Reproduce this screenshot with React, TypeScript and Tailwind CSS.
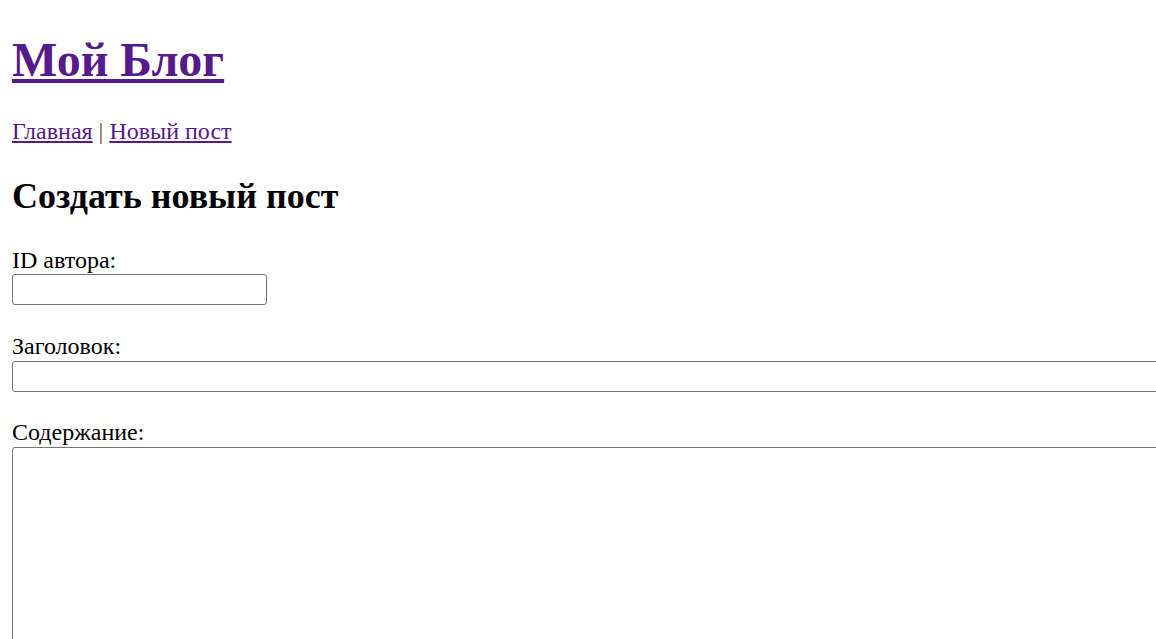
export default function App() {
  return (
    <div className="h-[639px] w-[1156px] overflow-hidden bg-white px-3 font-['Liberation_Serif',serif] text-black">
      <h1 className="mt-[32px] text-[48px] font-bold leading-[56px]">
        <a href="#" className="text-[#551a8b] underline">
          Мой Блог
        </a>
      </h1>
      <nav className="mt-[29px] text-[24px] leading-[28px]">
        <a href="#" className="text-[#551a8b] underline">
          Главная
        </a>
        <span className="text-[#6b4a2a]"> | </span>
        <a href="#" className="text-[#551a8b] underline">
          Новый пост
        </a>
      </nav>
      <h2 className="mt-[31px] text-[36px] font-bold leading-[41px]">Создать новый пост</h2>
      <form className="text-[24px] leading-[28px]">
        <label className="mt-[29px] block">ID автора:</label>
        <input
          type="text"
          className="block h-[31px] w-[255px] rounded-[3px] border border-[#767676] bg-white"
        />
        <label className="mt-[27px] block">Заголовок:</label>
        <input
          type="text"
          className="mt-[1px] block h-[31px] w-[1170px] rounded-[3px] border border-[#767676] bg-white"
        />
        <label className="mt-[26px] block">Содержание:</label>
        <textarea className="mt-[1px] block h-[300px] w-[1170px] resize-none rounded-[3px] border border-[#767676] bg-white" />
      </form>
    </div>
  )
}
